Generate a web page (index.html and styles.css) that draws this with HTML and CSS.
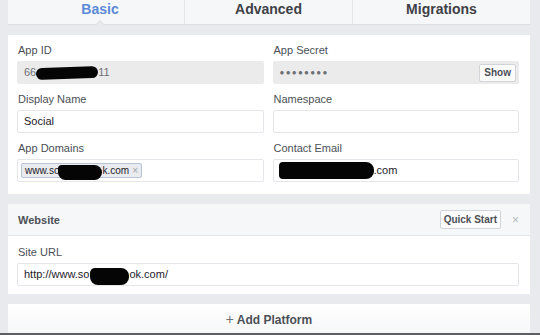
FILE: index.html
```html
<html>

<head>
    <title>App Settings</title>
    <link rel="stylesheet" href="styles.css">
</head>

<body>
    <div id="settings">
        <div class="tabs">
            <div class="tab tab-active">Basic<span class="caret"></span></div>
            <div class="tab">Advanced</div>
            <div class="tab">Migrations</div>
        </div>

        <div class="panel basic-panel">
            <div class="field">
                <label>App ID</label>
                <div class="input input-locked">66<span class="blot blot-id"></span>11</div>
            </div>
            <div class="field">
                <label>App Secret</label>
                <div class="input input-locked input-secret">
                    <span class="dots">&#9679;&#9679;&#9679;&#9679;&#9679;&#9679;&#9679;&#9679;</span>
                    <span class="btn btn-show">Show</span>
                </div>
            </div>
            <div class="field">
                <label>Display Name</label>
                <div class="input">Social</div>
            </div>
            <div class="field">
                <label>Namespace</label>
                <div class="input"></div>
            </div>
            <div class="field">
                <label>App Domains</label>
                <div class="input input-tokens">
                    <span class="token">www.so<span class="blot blot-domain"></span>k.com <span class="token-x">&times;</span></span>
                </div>
            </div>
            <div class="field">
                <label>Contact Email</label>
                <div class="input"><span class="blot blot-email"></span>.com</div>
            </div>
        </div>

        <div class="panel platform-panel">
            <div class="platform-head">
                <span class="platform-name">Website</span>
                <span class="btn btn-quick">Quick Start</span>
                <span class="platform-close">&times;</span>
            </div>
            <div class="platform-body">
                <div class="field">
                    <label>Site URL</label>
                    <div class="input">http://www.so<span class="blot blot-url"></span>ok.com/</div>
                </div>
            </div>
        </div>

        <div class="add-platform"><span class="plus">+</span> Add Platform</div>
    </div>
    <div class="bottom-edge"></div>
</body>

</html>
```

FILE: styles.css
```css
body {
    margin: 0;
    background: #e9eaed;
    font-family: 'Liberation Sans', Arial, sans-serif;
    width: 540px;
    height: 335px;
    overflow: hidden;
    position: relative;
}

#settings {
    margin: 0 10px 0 8px;
}

.tabs {
    display: grid;
    grid-template-columns: 176px 168px 1fr;
    height: 25px;
    background: #f6f7f9;
    border-bottom: 1px solid #dddfe2;
    box-sizing: border-box;
}

.tab {
    position: relative;
    text-align: center;
    font-size: 14px;
    font-weight: bold;
    color: #3e4146;
    line-height: 18px;
    border-left: 1px solid #e3e5e8;
}

.tab:first-child {
    border-left: none;
    padding-left: 8px;
}

.tab-active {
    color: #5b8ad6;
}

.caret {
    position: absolute;
    left: 50%;
    bottom: -1px;
    margin-left: -1px;
    width: 0;
    height: 0;
    border-left: 5px solid transparent;
    border-right: 5px solid transparent;
    border-bottom: 5px solid #dddfe2;
}

.caret::after {
    content: '';
    position: absolute;
    left: -4px;
    top: 1px;
    border-left: 4px solid transparent;
    border-right: 4px solid transparent;
    border-bottom: 4px solid #e9eaed;
}

.panel {
    background: #fff;
    margin-top: 10px;
}

.basic-panel {
    display: grid;
    grid-template-columns: 1fr 1fr;
    column-gap: 9px;
    row-gap: 9px;
    padding: 9px 11px 12px 9px;
}

.field label {
    display: block;
    font-size: 11px;
    line-height: 13px;
    color: #4b4f56;
    margin: 0 0 4px 1px;
}

.input {
    height: 23px;
    box-sizing: border-box;
    border: 1px solid #e4e6e9;
    border-radius: 2px;
    padding: 0 6px;
    font-size: 11px;
    line-height: 21px;
    color: #1d2129;
    display: flex;
    align-items: center;
}

.input-locked {
    background: #ebebeb;
    border-color: #ebebeb;
    color: #6d7075;
}

.input-secret {
    justify-content: space-between;
    padding-right: 2px;
}

.dots {
    font-size: 8px;
    letter-spacing: 1.3px;
    color: #6d7075;
}

.btn {
    display: inline-block;
    background: #fbfbfb;
    border: 1px solid #d2d4d8;
    border-radius: 2px;
    font-size: 10px;
    font-weight: bold;
    color: #4b4f56;
    line-height: 16px;
    padding: 0 4px;
}

.btn-show {
    height: 18px;
    box-sizing: border-box;
}

.input-tokens {
    padding: 0 3px;
}

.token {
    display: inline-flex;
    align-items: center;
    height: 15px;
    box-sizing: border-box;
    padding: 0 3px;
    background: #e9ebee;
    border: 1px solid #b6c2d6;
    border-radius: 2px;
    font-size: 10px;
    color: #1d2129;
}

.token-x {
    color: #a0a4ab;
    margin-left: 3px;
    font-size: 10px;
}

.blot {
    display: inline-block;
    background: #050505;
    border-radius: 6px;
}

.blot-id {
    width: 62px;
    height: 12px;
    transform: rotate(-2deg);
}

.blot-domain {
    width: 44px;
    height: 15px;
    margin: 3px 0 0 -1px;
    border-radius: 4px 8px 8px 8px;
}

.blot-email {
    width: 95px;
    height: 17px;
    margin-left: -1px;
    border-radius: 4px 8px 8px 4px;
}

.blot-url {
    width: 39px;
    height: 17px;
    margin: 4px 0 0 1px;
    border-radius: 5px 8px 8px 8px;
}

.platform-head {
    display: flex;
    align-items: center;
    height: 32px;
    padding: 0 10px 0 10px;
    background: #f6f7f9;
    border-bottom: 1px solid #e5e6e9;
    box-sizing: border-box;
}

.platform-name {
    flex: 1;
    font-size: 11px;
    font-weight: bold;
    color: #4b4f56;
}

.btn-quick {
    height: 19px;
    box-sizing: border-box;
    line-height: 17px;
    padding: 0 3px;
}

.platform-close {
    color: #b5b8bd;
    font-size: 12px;
    margin: 0 1px 0 11px;
}

.platform-body {
    padding: 10px 11px 8px 9px;
}

.add-platform {
    margin-top: 10px;
    height: 31px;
    background: linear-gradient(#fff, #f5f6f7);
    text-align: center;
    font-size: 12px;
    font-weight: bold;
    line-height: 31px;
    color: #4b4f56;
}

.plus {
    font-weight: normal;
    font-size: 14px;
    color: #6d7075;
}

.bottom-edge {
    position: absolute;
    left: 0;
    right: 0;
    bottom: 0;
    height: 2px;
    background: #5c5e61;
}
```
